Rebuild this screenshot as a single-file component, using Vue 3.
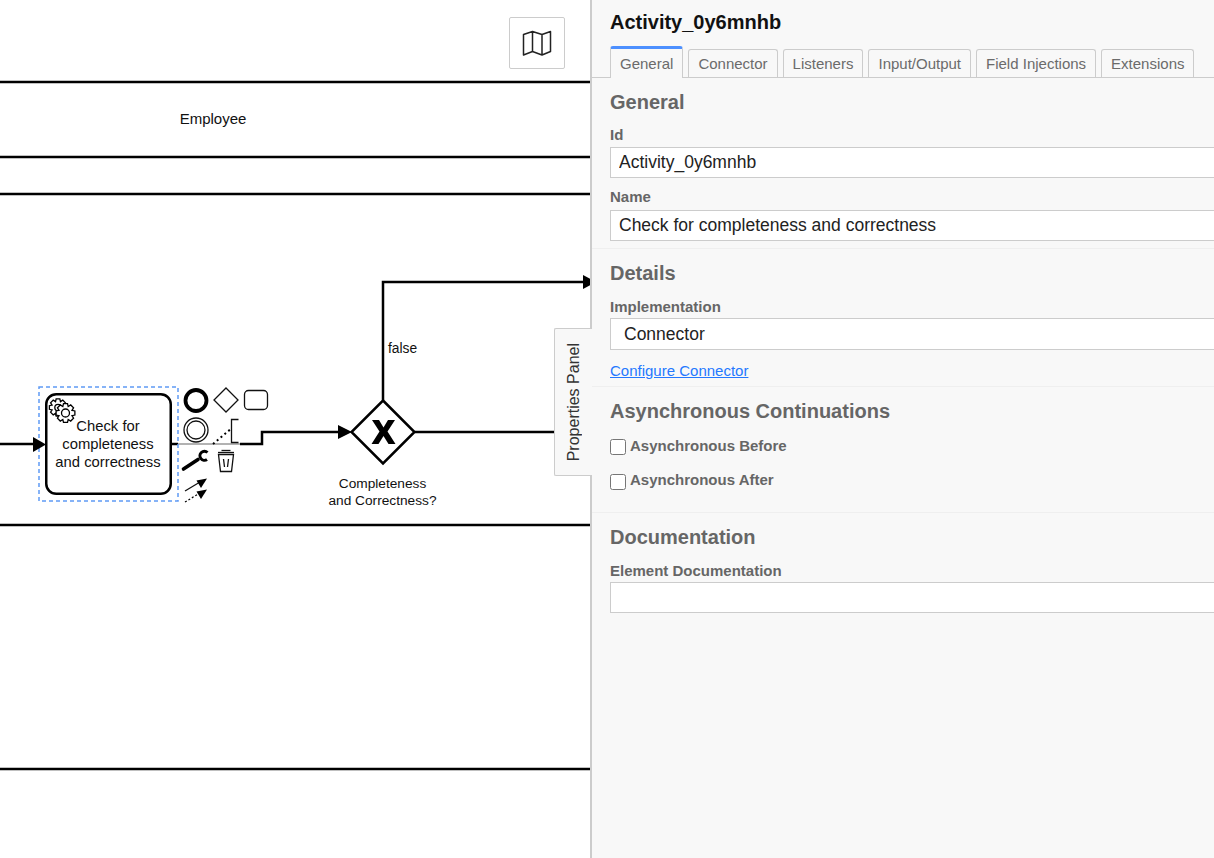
<script setup>
const tabs = ['General', 'Connector', 'Listeners', 'Input/Output', 'Field Injections', 'Extensions']

// contour d'engrenage pour l'icone de la tache
function gearPath(cx, cy, outer, inner, teeth) {
  const pts = []
  const step = (Math.PI * 2) / teeth
  for (let i = 0; i < teeth; i++) {
    const a = i * step
    const offsets = [
      [-0.5, inner],
      [-0.27, outer],
      [0.27, outer],
      [0.5, inner]
    ]
    for (const [o, r] of offsets) {
      const t = a + o * step
      pts.push((cx + Math.cos(t) * r).toFixed(2) + ' ' + (cy + Math.sin(t) * r).toFixed(2))
    }
  }
  return 'M' + pts.join('L') + 'Z'
}

const backGear = gearPath(58, 407.5, 8.8, 6.4, 8)
const frontGear = gearPath(65.5, 413, 9.6, 7, 8)
</script>

<template>
  <div class="page">
    <div class="canvas">
      <svg class="diagram" width="590" height="858" viewBox="0 0 590 858">
        <g class="lane">
          <line x1="0" y1="82" x2="590" y2="82" />
          <line x1="0" y1="157" x2="590" y2="157" />
          <line x1="0" y1="194" x2="590" y2="194" />
          <line x1="0" y1="525" x2="590" y2="525" />
          <line x1="0" y1="769" x2="590" y2="769" />
        </g>
        <text class="label-lg" x="213" y="123.5" text-anchor="middle">Employee</text>

        <!-- flows -->
        <g class="flow">
          <path d="M0 444H36" />
          <path d="M172 444H178" />
          <path d="M240 444H262V432H342" />
          <path d="M383 400V282H586" />
          <path d="M415 432H556" />
        </g>
        <path d="M178 444H240" fill="none" stroke="#999" stroke-width="1.5" />
        <path d="M338 425L352 432L338 439Z" />
        <path d="M583 275L596 282L583 289Z" />

        <!-- task -->
        <rect class="select" x="39" y="387" width="139" height="114" />
        <rect class="task" x="46.25" y="394.25" width="124.5" height="99.5" rx="10" />
        <path d="M33 437L46 444.5L33 452Z" />
        <g class="gear">
          <path :d="backGear" />
          <circle cx="58" cy="407.5" r="3.2" />
          <path :d="frontGear" />
          <circle cx="65.5" cy="413" r="4" />
        </g>
        <text class="label-task" text-anchor="middle">
          <tspan x="108" y="431">Check for</tspan>
          <tspan x="108" y="449">completeness</tspan>
          <tspan x="108" y="467">and correctness</tspan>
        </text>

        <!-- gateway -->
        <path class="gateway" d="M383 400.5L414.5 432L383 463.5L351.5 432Z" />
        <path d="M372 420H379L383.5 427.5L388 420H395L387.5 431.5L395.5 444H388.5L383.5 436L378.5 444H371.5L379.5 431.5Z" />
        <text class="label-sm" text-anchor="middle">
          <tspan x="382.5" y="488">Completeness</tspan>
          <tspan x="382.5" y="505">and Correctness?</tspan>
        </text>
        <text class="label-false" x="388" y="353">false</text>

        <!-- context pad -->
        <circle cx="196" cy="400.5" r="10.5" fill="none" stroke="#000" stroke-width="3.8" />
        <path class="pad" d="M226 388L238 400L226 412L214 400Z" />
        <rect class="pad" x="244.5" y="390.5" width="23" height="19" rx="4" />
        <circle class="pad" cx="196" cy="430" r="12" />
        <circle class="pad" cx="196" cy="430" r="9" />
        <path d="M213 444L232 428" fill="none" stroke="#000" stroke-width="2" stroke-dasharray="2 3" />
        <path class="pad" d="M238.5 419.5H231.5V442.5H238.5" />
        <path d="M183.5 469L198 459.5" fill="none" stroke="#000" stroke-width="3.6" stroke-linecap="round" />
        <path d="M207.5 452.5A4.5 4.5 0 1 0 207 459.5" fill="none" stroke="#000" stroke-width="3" />
        <g class="pad">
          <path d="M218 452.5H234" stroke-width="1.5" />
          <path d="M221.5 450.5H230.5" stroke-width="2" />
          <path d="M218.5 454.5L220.5 471.5H231.5L233.5 454.5Z" />
          <path d="M223.5 459L224.5 467M228.5 459L227.5 467" />
        </g>
        <path class="pad" d="M185 491L200 482" />
        <path d="M207 478.5L196.5 480.5L201 488Z" />
        <path d="M185 502L200 493" fill="none" stroke="#000" stroke-width="1.2" stroke-dasharray="2 2" />
        <path d="M207 489.5L196.5 491.5L201 499Z" />
      </svg>

      <button class="map-btn" type="button">
        <svg width="30" height="26" viewBox="0 0 30 26">
          <path d="M1.5 4.5L10.5 1.5L20 4.5L28.5 1.5V21.5L20 25L10.5 21.5L1.5 25ZM10.5 1.5V21.5M20 4.5V25" fill="none" stroke="#222" stroke-width="1.5" stroke-linejoin="round" />
        </svg>
      </button>

      <div class="toggle"><span>Properties Panel</span></div>
    </div>

    <aside class="panel">
      <header class="panel-head">
        <div class="title">Activity_0y6mnhb</div>
        <ul class="tabs">
          <li v-for="(t, i) in tabs" :key="t" class="tab" :class="{ active: i === 0 }">{{ t }}</li>
        </ul>
      </header>

      <section class="group group-general">
        <h3>General</h3>
        <label class="field-label">Id</label>
        <input class="field" type="text" value="Activity_0y6mnhb" />
        <label class="field-label">Name</label>
        <input class="field" type="text" value="Check for completeness and correctness" />
      </section>

      <section class="group group-details">
        <h3>Details</h3>
        <label class="field-label">Implementation</label>
        <select class="field select-field">
          <option>Connector</option>
        </select>
        <a class="link" href="#">Configure Connector</a>
      </section>

      <section class="group group-async">
        <h3>Asynchronous Continuations</h3>
        <label class="check"><input type="checkbox" /><span>Asynchronous Before</span></label>
        <label class="check"><input type="checkbox" /><span>Asynchronous After</span></label>
      </section>

      <section class="group group-docs">
        <h3>Documentation</h3>
        <label class="field-label">Element Documentation</label>
        <input class="field" type="text" />
      </section>
    </aside>
  </div>
</template>

<style scoped>
.page {
  display: flex;
  width: 1214px;
  height: 858px;
  overflow: hidden;
  font-family: "Liberation Sans", Arial, sans-serif;
  background: #fff;
}

.canvas {
  position: relative;
  flex: 0 0 590px;
  height: 858px;
}

.diagram {
  display: block;
}

.lane line {
  stroke: #000;
  stroke-width: 2.5;
}

.flow path {
  fill: none;
  stroke: #000;
  stroke-width: 2.5;
}

.select {
  fill: none;
  stroke: #5f9bf5;
  stroke-width: 1.5;
  stroke-dasharray: 4 3;
}

.task {
  fill: #fff;
  stroke: #000;
  stroke-width: 2.5;
}

.gear path,
.gear circle {
  fill: #fff;
  stroke: #000;
  stroke-width: 1.3;
}

.gateway {
  fill: #fff;
  stroke: #000;
  stroke-width: 2.5;
  stroke-linejoin: miter;
}

.pad,
.pad path {
  fill: none;
  stroke: #111;
  stroke-width: 1.3;
}

text {
  font-family: "Liberation Sans", Arial, sans-serif;
  fill: #111;
}

.label-lg {
  font-size: 15px;
}

.label-task {
  font-size: 14.8px;
}

.label-sm {
  font-size: 13.7px;
}

.label-false {
  font-size: 13.8px;
}

.map-btn {
  position: absolute;
  left: 509px;
  top: 17px;
  width: 56px;
  height: 52px;
  padding: 0;
  display: flex;
  align-items: center;
  justify-content: center;
  background: #fff;
  border: 1px solid #ccc;
  border-radius: 2px;
}

.toggle {
  position: absolute;
  left: 554px;
  top: 328px;
  width: 38px;
  height: 148px;
  box-sizing: border-box;
  display: flex;
  align-items: center;
  justify-content: center;
  background: #f8f8f8;
  border: 1px solid #ccc;
  border-right: 0;
  border-radius: 2px 0 0 2px;
  z-index: 2;
}

.toggle span {
  writing-mode: vertical-rl;
  transform: rotate(180deg);
  font-size: 16px;
  color: #333;
  white-space: nowrap;
}

.panel {
  flex: 0 0 624px;
  box-sizing: border-box;
  height: 858px;
  overflow: hidden;
  background: #f8f8f8;
  border-left: 2px solid #ccc;
}

.panel-head {
  height: 78px;
  box-sizing: border-box;
  padding: 10px 0 0 18px;
  border-bottom: 1px solid #ccc;
}

.title {
  font-size: 20px;
  line-height: 24px;
  font-weight: 700;
  color: #111;
}

.tabs {
  display: flex;
  align-items: flex-start;
  gap: 5px;
  height: 31px;
  margin: 12px 0 0;
  padding: 3px 0 0;
  box-sizing: border-box;
  list-style: none;
}

.tab {
  box-sizing: border-box;
  height: 28px;
  padding: 0 9px;
  font-size: 15px;
  line-height: 28px;
  color: #6b6b6b;
  background: #f8f8f8;
  border: 1px solid #ccc;
  border-bottom: 0;
  border-radius: 3px 3px 0 0;
}

.tab.active {
  position: relative;
  height: 32px;
  margin-top: -3px;
  line-height: 29px;
  border-top: 3px solid #4d90ff;
}

.group {
  box-sizing: border-box;
  padding: 12px 0 0 18px;
  border-bottom: 1px solid #efefef;
}

.group h3 {
  margin: 0;
  font-size: 20px;
  line-height: 24px;
  font-weight: 700;
  color: #666;
}

.group-general {
  height: 171px;
}

.group-details {
  height: 138px;
}

.group-async {
  height: 126px;
}

.group-docs {
  border-bottom: 0;
}

.field-label {
  display: block;
  margin-top: 10px;
  font-size: 15px;
  line-height: 18px;
  font-weight: 700;
  color: #666;
}

.group h3 + .field-label {
  margin-top: 12px;
}

.group-details h3 + .field-label,
.group-docs h3 + .field-label {
  margin-top: 13px;
}

.field {
  display: block;
  box-sizing: border-box;
  width: 800px;
  height: 31px;
  margin: 4px 0 0;
  padding: 0 8px;
  font-family: inherit;
  font-size: 17.5px;
  color: #222;
  background: #fff;
  border: 1px solid #ccc;
  border-radius: 0;
  outline: none;
}

.group h3 + .field-label + .field {
  margin-top: 3px;
}

.group-details h3 + .field-label + .field,
.group-docs h3 + .field-label + .field {
  margin-top: 2px;
}

.select-field {
  height: 32px;
  padding-left: 13px;
  appearance: none;
}

.link {
  display: block;
  margin-top: 12px;
  font-size: 15px;
  line-height: 18px;
  color: #2478ff;
}

.check {
  display: flex;
  align-items: flex-start;
  gap: 4px;
  height: 34px;
  font-size: 15px;
  line-height: 16px;
  font-weight: 700;
  color: #666;
}

.group-async h3 {
  margin-bottom: 15px;
}

.check input {
  width: 16px;
  height: 16px;
  margin: 1px 0 0;
}

.check:last-child input {
  margin-top: 2px;
}
</style>

<style>
html,
body {
  margin: 0;
  overflow: hidden;
}
</style>
